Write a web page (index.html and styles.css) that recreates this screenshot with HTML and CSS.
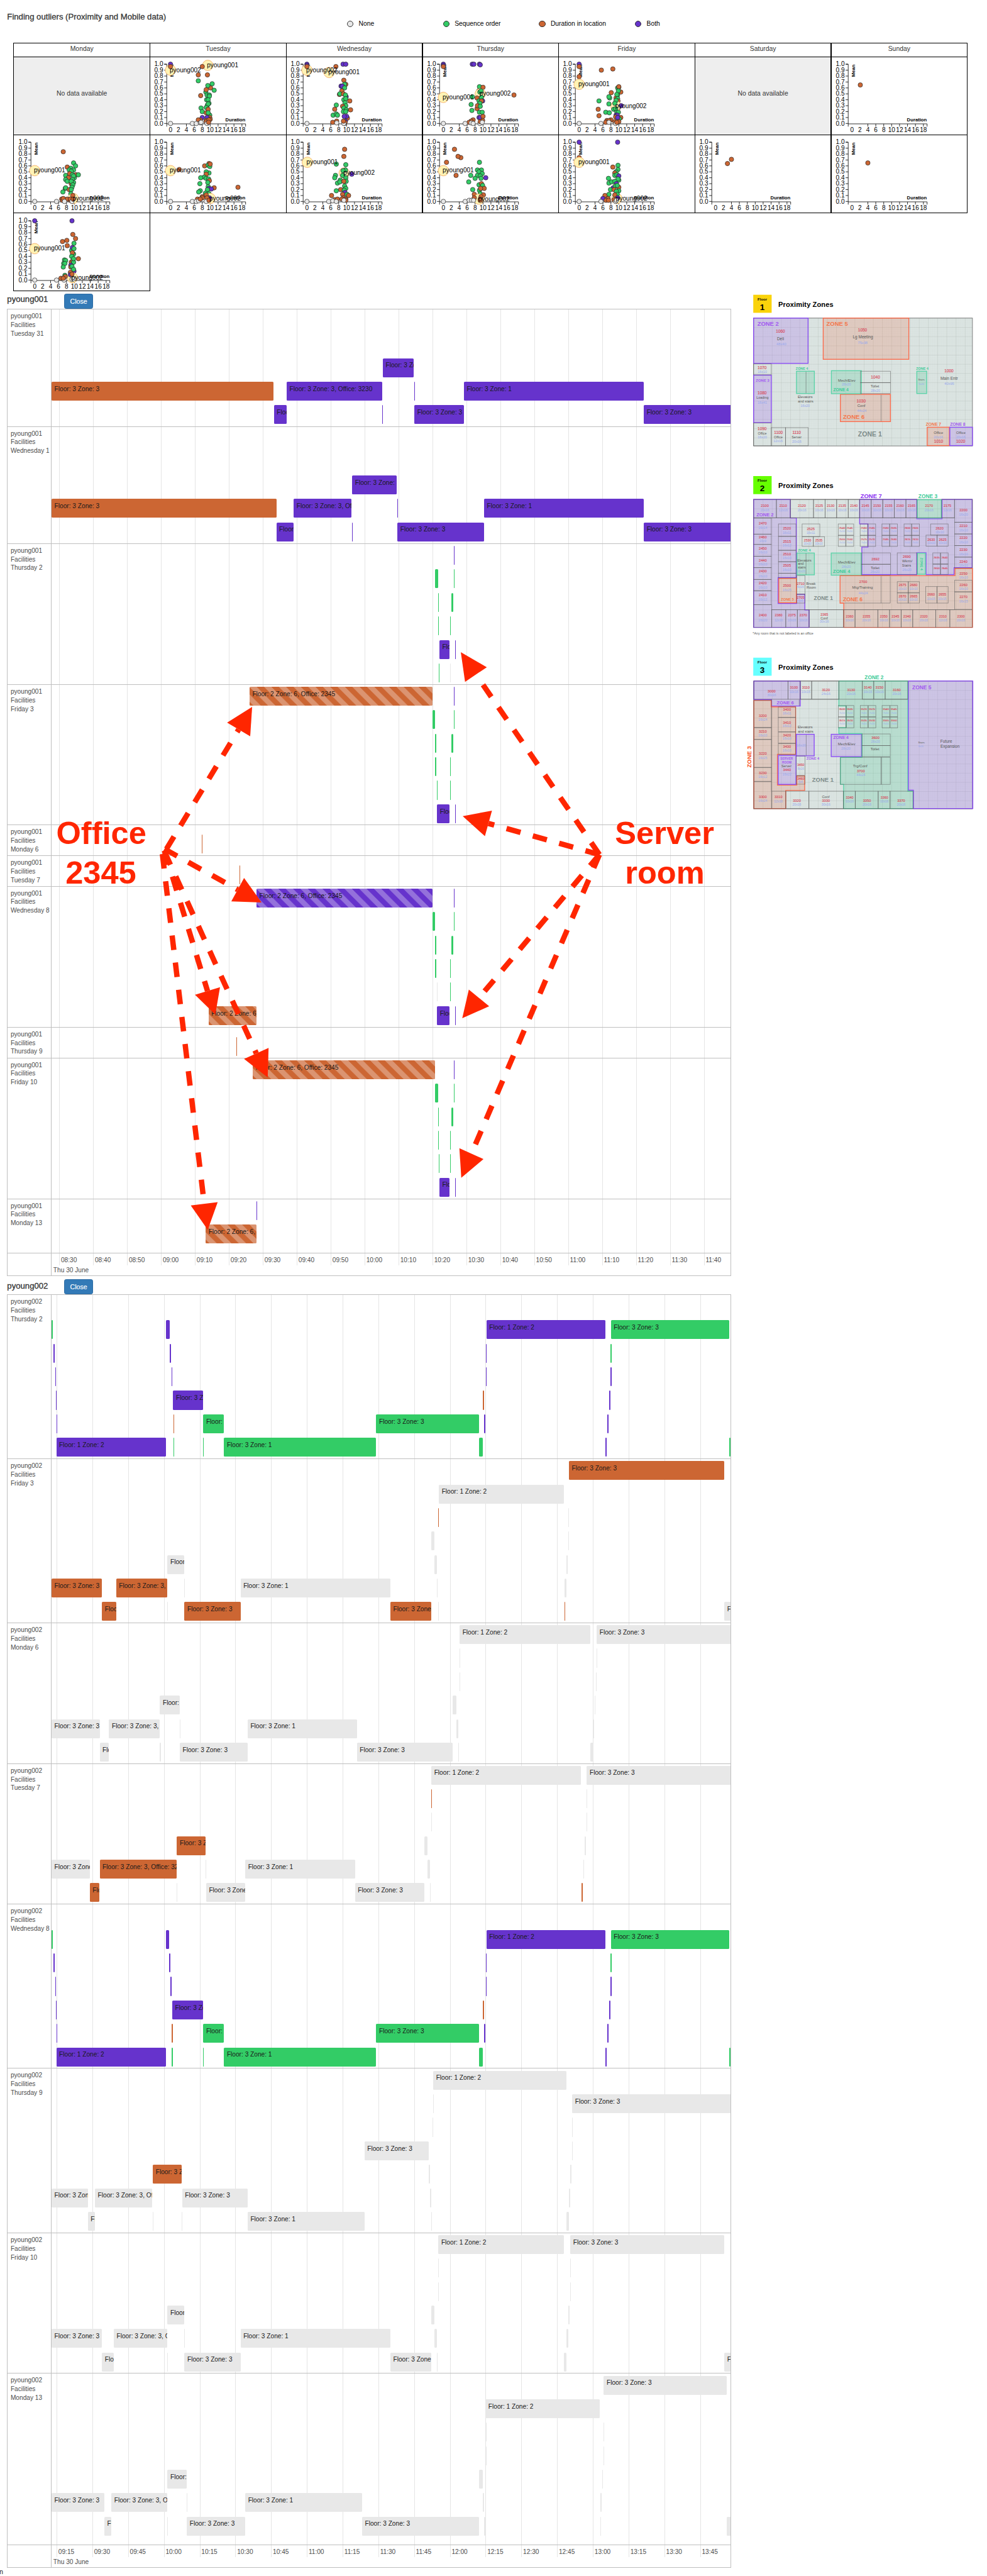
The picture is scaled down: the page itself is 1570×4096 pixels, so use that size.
FILE: index.html
```html
<!DOCTYPE html>
<html lang="en">
<head>
<meta charset="utf-8">
<title>Finding outliers</title>
<link rel="stylesheet" href="styles.css">
</head>
<body>
<div class="page">
  <header class="top">
    <h4 class="heading">Finding outliers (Proximity and Mobile data)</h4>
    <ul class="legend">
      <li><i class="dot none"></i>None</li>
      <li><i class="dot seq"></i>Sequence order</li>
      <li><i class="dot dur"></i>Duration in location</li>
      <li><i class="dot both"></i>Both</li>
    </ul>
  </header>
  <section class="calendar" id="calendar"></section>
  <main class="main">
    <div class="timelines">
      <div class="person"><h4 class="heading">pyoung001</h4><button class="close">Close</button></div>
      <section class="timeline" id="tl1"></section>
      <div class="person second"><h4 class="heading">pyoung002</h4><button class="close">Close</button></div>
      <section class="timeline" id="tl2"></section>
    </div>
    <aside class="plans">
      <svg id="plan1" viewBox="0 30 1419 990" width="473" height="330"></svg>
      <svg id="plan2" viewBox="0 0 1419 1080" width="473" height="360"></svg>
      <svg id="plan3" viewBox="30 -30 1419 1050" width="473" height="350"></svg>
    </aside>
  </main>
  <div class="tail">n</div>
  <svg class="notes" id="notes" viewBox="0 0 1933 5043" width="1933" height="5043"></svg>
</div>
<script src="script.js"></script>
</body>
</html>
```
FILE: styles.css
```css
html, body { margin: 0; padding: 0; background: #fff; }
body { font-family: "Liberation Sans", Arial, sans-serif; font-size: 12.5px; line-height: 17px; color: #333; overflow-x: hidden; }
.page { zoom: 0.81221; position: relative; width: 1933px; height: 5043px; overflow: hidden; }
.top { display: flex; height: 83.4px; }
.heading { margin: 0; font-size: 16.2px; line-height: 20px; font-weight: 400; -webkit-text-stroke: 0.35px #333; white-space: nowrap; }
.top .heading { width: 665px; padding: 23px 0 0 14px; box-sizing: border-box; }
.legend { display: flex; margin: 0; padding: 38px 0 0 14.5px; list-style: none; color: #000; }
.legend li { display: flex; gap: 10px; width: 188px; align-items: center; height: 18px; font-size: 12.7px; }
.dot { width: 13px; height: 13px; border: 1px solid #333; border-radius: 50%; box-sizing: border-box; }
.none { background: #e8e8e8; fill: #e8e8e8; }
.seq { background: #3c6; fill: #3c6; }
.dur { background: #c63; fill: #c63; }
.both { background: #63c; fill: #63c; }

.calendar { display: grid; grid-template-columns: repeat(7, 266.8px); grid-template-rows: 27.2px repeat(3, 153px); margin-left: 26.4px; }
.cell { border: 1px solid #000; margin: 0 -1px -1px 0; box-sizing: border-box; display: flex; justify-content: center; font-size: 12.8px; }
.cell.chart { justify-content: flex-start; }
.day { padding-top: 3px; }
.empty { background: #eee; align-items: center; padding-bottom: 8px; }
.plot { display: block; overflow: visible; margin: -1px 0 0 -1px; }
.plot line, .plot path { stroke: #000; fill: none; }
.plot text { fill: #000; font-size: 12.4px; }
.plot .title { font-size: 9.5px; font-weight: 700; }
.plot circle { stroke: #222; stroke-opacity: .85; }
.plot .hi { fill: #fff3b5; stroke: #f49a4a; }

.main { display: flex; justify-content: space-between; }
.timelines { width: 1419px; padding-left: 14px; box-sizing: content-box; }
.person { display: flex; align-items: flex-start; height: 35.2px; }
.person .heading { width: 111.8px; padding-top: 7px; }
.person.second { height: 35.6px; }
.person.second .heading { padding-top: 9px; }
.close { margin-top: 5.5px; width: 56.5px; height: 29.5px; padding: 0; background: #337ab7; border: 1px solid #2e6da4; border-radius: 4px; color: #fff; font: 13px "Liberation Sans", Arial, sans-serif; -webkit-text-stroke: .2px #fff; }
.second .close { margin-top: 6.2px; }
.timeline { position: relative; width: 1418.4px; border: 1px solid #bfbfbf; box-sizing: border-box; }
.row { display: flex; border-bottom: 1px solid #bfbfbf; box-sizing: border-box; position: relative; }
.name { width: 86.3px; padding: 4.8px 0 0 5.6px; box-sizing: border-box; border-right: 1px solid #bfbfbf; white-space: pre-line; color: #4d4d4d; flex: none; }
.lanes { position: relative; flex: 1; overflow: hidden; }
.bar { position: absolute; height: 37px; border-radius: 2px; box-sizing: border-box; overflow: hidden; white-space: nowrap; color: #1a1a1a; }
.bar span { display: block; padding: 5.8px 0 0 5.6px; }
.striped { background-image: linear-gradient(45deg, rgba(255,255,255,.3) 25%, transparent 25%, transparent 50%, rgba(255,255,255,.3) 50%, rgba(255,255,255,.3) 75%, transparent 75%); background-size: 28.8px 28.8px; }
.axis { display: flex; color: #4d4d4d; height: 43.5px; }
.axis .name { padding: 0; }
.axis .times { position: relative; flex: 1; padding: 24.5px 0 0 3px; box-sizing: border-box; }
.tick { position: absolute; top: 4.5px; padding-left: 3.4px; }
.gridlines { position: absolute; top: 0; bottom: 20px; left: 86.3px; right: 0; overflow: hidden; }
.gridlines i { position: absolute; top: 0; bottom: 0; border-left: 1px solid #e5e5e5; }
.plans { width: 473px; display: flex; flex-direction: column; }
.plans svg { display: block; }
.plans text { font-family: "Liberation Sans", Arial, sans-serif; text-anchor: middle; }
.floor { font-weight: 700; fill: #000; }
.num { fill: #d8485a; stroke: #d8485a; stroke-width: .5; }
.dim { fill: #98a9ee; }
.word, .wordx { fill: #555; }
.zp { fill: #a259f0; font-weight: 700; }
.zs { fill: #8a2cf2; font-weight: 700; }
.zo { fill: #f4774c; font-weight: 700; }
.zq { fill: #fa5120; font-weight: 700; }
.zg { fill: #3ccb98; font-weight: 700; }
.zn { fill: #7d8b8a; font-weight: 700; }
.room { fill: none; stroke: #555; stroke-opacity: .62; stroke-width: 3; }
.area { stroke-width: 5; fill-opacity: .24; }
.ap { stroke: #8a4bf5; fill: #a060f0; }
.ao { stroke: #fb6a4b; fill: #f0653c; fill-opacity: .2; }
.ag { stroke: #5ad3a8; fill: #4cc795; }
.tail { position: absolute; left: -1px; bottom: 0; color: #222; line-height: 16px; }
.notes { position: absolute; left: 0; top: 0; pointer-events: none; }
.notes text { fill: #ff2600; font: 700 62.3px "Liberation Sans", Arial, sans-serif; text-anchor: middle; }
.notes line { stroke: #ff2600; stroke-width: 10.5; stroke-dasharray: 28.5 25; }
.notes path { fill: #ff2600; }
```
FILE: script.js
```js
const KIND = { n: 'none', g: 'seq', o: 'dur', p: 'both' };

/* ---------- calendar of scatter plots: kind, duration, mean ---------- */
const H1 = 'pyoung001', H2 = 'pyoung002';
const days = ['Monday', 'Tuesday', 'Wednesday', 'Thursday', 'Friday', 'Saturday', 'Sunday'];
const plots = [
  null,
  'p 0 1,2 0 .9,1 9.4 .98,o 0 .96,o 8 .96,o 7 .82,o 9.3 .82,g 7 .72,g 10.5 .67,o 10.1 .6,g 9.4 .64,g 8.9 .53,o 9 .57,g 11 .56,o 7.6 .47,g 9.2 .48,g 9.8 .48,g 9.8 .46,g 9.1 .4,g 9.5 .4,g 9.7 .34,g 9.3 .31,g 9.5 .33,g 9 .27,g 7.7 .26,g 8 .2,o 9.5 .24,o 9 .18,g 9.9 .14,g 9.5 .18,p 8 .1,o 9.9 .1,p 9.2 .1,o 7.5 .06,o 7 .06,o 9 .05,o 10 .07,n 5.5 0,n 6.5 0,n 7.5 .01,o 9 .03,n 9.2 0,o 9.7 .06,o 9.6 .02,n 7.7 .02,n 0 0',
  'p 0 1,p 0 .98,2 0 .9,1 5.6 .86,o 0 .96,o 7.3 .96,p 9.1 1,p 9.8 1,o 9.3 .73,o 9.8 .66,g 9.5 .66,p 8.6 .63,p 8.9 .63,g 9.5 .6,o 8.8 .55,o 8.2 .49,g 8.3 .5,o 9.2 .5,p 9.9 .45,g 9.7 .48,g 9.3 .4,g 9.8 .42,o 10.8 .38,g 9.6 .35,g 7.4 .31,g 9.8 .3,o 9 .29,g 9.3 .26,o 7 .24,g 9.9 .23,o 11 .23,g 9.2 .2,g 9.8 .2,g 6.6 .14,g 7.4 .16,g 7.7 .14,o 10.2 .09,p 10 .12,p 9.4 .12,o 6.5 .02,o 7.5 .04,n 7.5 .01,n 9.5 0,p 9.7 .04,o 9.6 .02,n 9.3 0,o 9.2 .04,n 0 0',
  'p 0 1,p 0 .98,o 0 .96,1 0 .44,p 7.3 1,p 7.7 1,p 9.1 1,p 9.3 .99,g 9.1 .62,o 10 .61,o 8.9 .55,2 9.3 .5,g 9.2 .53,g 9.5 .55,g 7.3 .45,o 8.5 .43,g 9.6 .44,g 9 .38,p 9.9 .38,o 9.6 .38,g 7 .32,g 9.2 .34,o 8.5 .25,o 8.6 .3,g 9.3 .29,g 7.2 .22,g 9.1 .19,g 9.8 .19,p 9 .1,p 9.3 .1,o 10 .12,o 7.5 .06,o 7 .04,o 6.5 .02,n 5.5 0,n 7 .01,n 7.5 0,n 9.2 0,o 9.9 .05,o 9.3 .03,n 9.8 .02,o 17.8 .48,n 0 0',
  'p 0 1,o 0 .96,o 0 .79,1 0 .66,o 5.6 .9,o 8.5 .92,g 9.7 .6,g 10 .61,o 10 .62,o 10.5 .53,g 9.9 .55,o 8.1 .52,g 9.7 .48,o 9.3 .43,g 9.7 .42,g 9.5 .49,g 7.7 .43,g 7.5 .45,g 5 .38,o 9.8 .38,2 9.3 .29,g 9.3 .39,g 7.5 .33,g 9 .34,p 10.6 .3,g 8.7 .24,g 9.2 .25,o 4.8 .24,g 6.7 .19,g 7.6 .18,g 9.5 .19,g 9.9 .19,o 5 .13,p 9.3 .14,p 9.6 .14,o 9.2 .11,o 10.5 .1,g 10.1 .08,p 9.7 .1,o 7 .05,o 8 .06,o 7.5 .05,o 6.7 .02,n 7.5 .02,n 5.5 0,o 9 .03,o 10 .03,n 9.2 0,o 9.5 .02,n 0 0',
  null,
  'o 2.1 .65',
  'o 7.2 .84,1 0 .52,g 9.8 .65,g 10.3 .6,o 8.2 .58,g 9.1 .56,g 9.8 .53,g 8.7 .53,g 9.2 .51,o 10.4 .45,g 11 .45,g 7.8 .44,o 8.8 .47,o 8.5 .4,g 9.5 .45,g 10 .4,g 9.8 .43,g 7.8 .37,g 8.2 .34,g 9.5 .37,o 9.2 .3,g 9.8 .32,g 9.2 .34,g 9.6 .28,g 9.4 .24,g 7.7 .22,g 7.8 .23,g 7.1 .16,o 8.7 .2,g 9.2 .2,g 9.1 .13,2 9.7 .05,o 9.6 .1,o 6.8 .04,o 7 .02,o 7.5 .02,o 8.2 .04,o 7.2 .05,n 5.5 0,o 9 .02,n 7.5 0,o 9 .04,n 9.4 0,o 9.7 .04,n 0 0',
  '1 0 .52,o 2.2 .54,o 9.7 .64,o 8.6 .6,g 9.5 .61,g 9.9 .59,o 10 .63,g 9.7 .48,g 9 .5,o 9 .46,g 8.5 .41,g 7.6 .4,g 9 .39,g 9.6 .38,o 9.8 .35,g 9.4 .32,g 7.4 .3,o 11 .23,g 9.5 .25,p 9.7 .22,p 10.3 .21,o 17 .24,g 7.5 .18,g 7.1 .16,g 9.3 .2,g 8.8 .14,g 9.7 .13,2 10 .05,o 9 .11,p 9.8 .06,o 8 .08,o 6.8 .04,o 8 .06,o 9.2 .06,n 5.5 0,n 6.5 0,n 7.1 .01,n 9 0,o 7.5 .04,o 9.7 .02,n 0 0',
  'o 9.5 .88,o 9.3 .76,1 .1 .66,g 7.4 .63,g 9.8 .62,2 9.4 .48,g 9.7 .53,g 9.1 .52,p 11.3 .46,g 7.2 .44,g 7 .4,g 9.8 .4,g 9 .44,g 8.4 .36,g 9.9 .34,g 7.7 .31,g 8.3 .33,o 9.3 .34,g 9.5 .26,o 8.5 .2,g 7.4 .18,g 9.8 .22,g 9.4 .19,p 9.6 .15,g 10.1 .12,o 9 .12,o 6.2 .1,o 10.5 .1,o 9.2 .06,o 9.8 .04,o 7 .03,o 7.7 .04,n 5.5 0,n 6.5 .01,n 7.4 0,o 8.8 .04,o 9.8 .02,n 9.3 .02,n 0 0',
  'o 2.8 .88,o 4.4 .74,o 3.7 .76,o .8 .66,g 9.1 .66,1 0 .52,g 8.6 .53,g 9.6 .53,g 9 .5,o 3.2 .44,g 6.9 .44,g 9.8 .47,g 8.6 .44,g 8 .39,g 9.3 .43,g 9.5 .39,p 10.7 .4,g 6.4 .33,g 9 .28,o 9.6 .3,g 9.9 .27,g 7.4 .2,o 10.3 .22,g 9.1 .19,o 9.4 .22,g 9.3 .13,o 7.8 .12,o 10.1 .11,2 9 .04,o 9.5 .08,o 7.8 .06,n 5.5 0,n 6.5 .02,n 7.1 .02,n 7.6 .02,o 9.3 .04,o 9.3 .02,n 0 0',
  'p 0 1,p 9.7 1,o 0 .74,1 0 .66,g 9.8 .61,o 8.5 .58,g 9.8 .54,g 9.3 .5,o 9 .48,g 9 .44,g 9.5 .45,p 10 .43,g 7.4 .39,g 10 .36,g 9.8 .38,g 7.5 .31,g 8.2 .33,g 9 .34,p 9.4 .3,o 10 .24,p 8.6 .23,g 9.1 .26,g 9.6 .27,g 7.9 .2,o 8.8 .2,g 10 .18,g 9.4 .17,g 7.5 .12,2 9.5 .05,g 9.6 .12,o 9 .11,o 6.5 .1,p 9.7 .06,p 6 .05,o 7.3 .05,o 6.8 .02,o 7.4 .02,n 5.5 0,o 8.8 .03,n 9.2 0,n 9.4 .02,n 0 0',
  'o 3 .64,o 4 .71',
  'o 4 .65',
  'p 0 1,p 9.4 1,o 9.6 .77,o 10.3 .7,o 7 .65,o 8.1 .67,g 9.9 .62,o 8.2 .58,1 0 .53,g 9.3 .5,p 9.5 .55,g 9.9 .53,g 9.8 .44,o 9.5 .46,g 9.3 .4,o 11 .36,g 7.5 .34,g 7.8 .33,o 9.2 .3,o 9.6 .33,g 9.8 .3,g 9.8 .36,g 7.3 .28,g 7.6 .28,g 7.2 .22,p 9.1 .25,o 9.1 .22,g 9.4 .23,p 9.9 .15,g 9.8 .18,g 7.6 .08,o 9 .13,2 9.5 .04,p 9 .09,o 9.4 .1,o 7.7 .06,o 6.6 .03,n 5.5 0,n 7.4 0,o 7.2 .03,n 9.4 .01,n 9.8 .02,n 0 0'
];
const px = v => (40.9 + v * 7.77).toFixed(1), py = v => (130.9 - v * 116).toFixed(1);
function scatter(data) {
  let s = '<svg class="plot" width="265" height="152"><path d="M28.5 14.9H33.5V137M33.5 131.7H188V137"/>';
  for (let i = 0; i <= 10; i++) {
    const y = +py(i / 10);
    s += `<line x1="28.5" x2="33.5" y1="${y}" y2="${y}"/><text x="26.5" y="${y + 4}" text-anchor="end">${(i / 10).toFixed(1)}</text>`;
  }
  for (let i = 0; i <= 18; i += 2) {
    if (i > 2) s += `<line x1="${px(i)}" x2="${px(i)}" y1="131.7" y2="137"/>`;
    s += `<text x="${px(i)}" y="148.3" text-anchor="middle">${i}</text>`;
  }
  s += '<text class="title" x="187.5" y="126.5" text-anchor="end">Duration</text><text class="title" transform="translate(46.8 15.4) rotate(-90)" text-anchor="end">Mean</text>';
  let labels = '';
  for (const p of data.split(',')) {
    const [k, x, y] = p.split(' ');
    if (KIND[k]) s += `<circle class="${KIND[k]}" cx="${px(+x)}" cy="${py(+y)}" r="4.4"/>`;
    else {
      s += `<circle class="hi" cx="${px(+x)}" cy="${py(+y)}" r="10.3"/>`;
      labels += `<text x="${px(+x) - 1.6}" y="${+py(+y) + 3.8}">${k === '1' ? H1 : H2}</text>`;
    }
  }
  return s + labels + '</svg>';
}
document.getElementById('calendar').innerHTML =
  days.map(d => `<div class="cell day">${d}</div>`).join('') +
  plots.map(p => p ? `<div class="cell chart">${scatter(p)}</div>` : '<div class="cell empty">No data available</div>').join('');

/* ---------- timelines ---------- */
const A = 'Floor: 3 Zone: 3', B = 'Floor: 3 Zone: 1', C = 'Floor: 1 Zone: 2', D = 'Floor: 3 Zone: 3, Office: 3230', E = 'Floor: 2 Zone: 6, Office: 2345';
const TXT = { A, B, C, D, E };
const FROM = 108.5, SPAN = 1441;
/* item: lane kind start-end [label]; an upper-case kind is striped */
const big = s => `1g108-111,1p351-${s ? 357 : 359},1p1031-1283C,1g1295-1546A,2p111-115,2p${s ? '357-360' : '359-362'},2p1029-1032,2g1294-1297,3p115-117,3p${s ? '360-363' : '362-364'},3p1029-1032,3p1294-1297,4p117-119,4p${s ? 364 : 366}-429D,4o1023-1026,4p1291-1294,5p118-120,5o${s ? '363-366' : '366-368'},5g430-474A,5g797-1015A,5p1026-1029,5p1287-1291,6p118-351C,6g${s ? '363-366' : '366-368'},6g429-431,6g474-797B,6g1015-1023,6p1283-1287,6g1546-1550`;
const tl1 = [
  ['Tuesday 31', 229.6, 3.3, '3o108-579A,4p580-607A,3p607-810D,4p810-812,2p811-877D,3p877-879,4p878-983A,3p983-1365B,4p1365-1550A'],
  ['Wednesday 1', 229.4, 3.3, '3o108-585A,4p585-622A,3p622-745D,4p745-747,2p746-841D,3p841-843,4p842-1026A,3p1026-1365B,4p1365-1550A'],
  ['Thursday 2', 276, 3.8, '0p961-964,1g922-928,1g961-964,2g928-930,2g956-961,3g928-930,3g954-956,4p931-953A,4p964-966,5g930-932,5n953-955'],
  ['Friday 3', 275, 3.6, '0O528-917E,0p961-964,1g917-922,1g961-964,2g922-925,2g956-961,3g922-925,3g954-956,4g925-927,4g953-955,5p926-953A,5p964-966'],
  ['Monday 6', 59.9, 18.2, '0o427-429'],
  ['Tuesday 7', 59.9, 18.2, '0o506-508'],
  ['Wednesday 8', 276, 4, '0P543-917E,0p961-964,1g917-922,1g961-964,2g922-925,2g956-961,3g922-925,3g954-956,4n925-927,4g953-955,5O441-543E,5p926-953A,5p964-966'],
  ['Thursday 9', 60, 18.6, '0o500-502'],
  ['Friday 10', 276, 4, '0O535-922E,0p961-964,1g922-928,1g961-964,2g928-930,2g956-961,3g928-930,3g954-956,4g929-931,4g953-955,5p931-953A,5p964-966'],
  ['Monday 13', 106, 3.6, '0p543-545,1O435-543E']
];
const tl2 = [
  ['Thursday 2', 321.3, 3.6, big(0)],
  ['Friday 3', 321.3, 3.8, '0o1206-1536A,1n930-1196C,2o928-930,2n1204-1206,3n914-921,3n1204-1206,4n354-389A,4n921-926,4n1201-1204,5o108-215A,5o245-353D,5n389-391,5n509-827B,5n926-928,5n1197-1201,6o215-245A,6n353-355,6o390-509A,6o827-914A,6n928-930,6o1196-1198,6n1536-1550A'],
  ['Monday 6', 275.6, 3.8, '0n974-1252C,0n1265-1550A,1n973-975,1n1264-1266,2n973-975,2n1263-1265,3n338-380A,3n959-967,3n1260-1263,4n108-210A,4n230-337D,4n380-382,4n524-756B,4n967-971,4n1258-1260,5n210-230A,5n337-340,5n380-524A,5n756-959A,5n971-973,5n1252-1258'],
  ['Tuesday 7', 275.3, 3.4, '0n914-1232C,0n1244-1550A,1o913-915,1n1243-1245,2n913-915,2n1243-1245,3o374-435D,3n899-906,3n1239-1243,4n108-189A,4o210-373D,4n435-437,4n519-752B,4n906-911,4n1236-1239,5o189-210A,5n373-375,5n436-519A,5n752-899A,5n911-913,5o1232-1236'],
  ['Wednesday 8', 321.2, 3.6, big(1)],
  ['Thursday 9', 322.2, 4.2, '0n918-1201C,1n917-919,1n1213-1550A,2n916-918,2n1212-1214,3n772-908A,3n1212-1214,4o323-384D,4n908-911,4n1209-1212,5n108-185A,5n200-322D,5n385-524A,5n911-914,5n1206-1209,6n185-200A,6n322-324,6n384-386,6n524-772B,6n914-916,6n1201-1206'],
  ['Friday 10', 274.6, 3.6, '0n929-1196C,0n1209-1536A,1n928-930,1n1208-1210,2n928-930,2n1208-1210,3n354-389A,3n914-921,3n1205-1208,4n108-215A,4n240-353D,4n389-391,4n509-827B,4n921-926,4n1201-1205,5n215-240A,5n353-355,5n390-509A,5n827-914A,5n926-928,5n1196-1201,5n1536-1550A'],
  ['Monday 13', 336, 4.4, '0n1280-1541A,1n1029-1272C,2n1029-1032,2n1279-1281,3n1029-1032,3n1279-1281,4n354-395A,4n1015-1023,4n1276-1279,5n108-220A,5n235-353D,5n395-397,5n519-767B,5n1023-1026,5n1273-1276,6n220-235A,6n353-355,6n395-519A,6n767-1015A,6n1026-1029,6n1272-1274,6n1541-1550']
];
const pct = v => (v / SPAN * 100).toFixed(3) + '%';
function timeline(id, who, rows, first, step, start, every, count) {
  let s = '<div class="gridlines">';
  for (let i = 0; i < count; i++) s += `<i style="left:${pct(first + i * step - FROM)}"></i>`;
  s += '</div>';
  for (const [day, h, off, items] of rows) {
    s += `<div class="row" style="height:${h}px"><div class="name">${who}\nFacilities\n${day}</div><div class="lanes">`;
    for (const it of items.split(',')) {
      const m = it.match(/^(\d)(\w)(\d+)-(\d+)(\w?)$/), k = m[2].toLowerCase();
      /* very short visits are drawn a little narrower than their slot */
      const w = m[4] - m[3], trim = w < 5 ? 0.7 : 0;
      s += `<div class="bar ${KIND[k]}${k !== m[2] ? ' striped' : ''}" style="left:${pct(m[3] - FROM + trim / 2)};width:${pct(w - trim)};top:${off + 46 * m[1]}px">${m[5] ? `<span>${TXT[m[5]]}</span>` : ''}</div>`;
    }
    s += '</div></div>';
  }
  s += '<div class="axis"><div class="name"></div><div class="times">Thu 30 June';
  for (let i = 0; i < count; i++) {
    const t = start + i * every;
    s += `<span class="tick" style="left:${pct(first + i * step - FROM)}">${String(Math.floor(t / 60)).padStart(2, '0')}:${String(t % 60).padStart(2, '0')}</span>`;
  }
  document.getElementById(id).innerHTML = s + '</div></div>';
}
timeline('tl1', H1, tl1, 124.2, 72.02, 510, 10, 20);
timeline('tl2', H2, tl2, 118.7, 75.88, 555, 15, 19);

/* ---------- floor plans ---------- */
function plan(id, floor, color, y0, dx, rooms, lines, areas, texts) {
  const by = y0 - 136, top = y0;
  let s = `<defs><pattern id="${id}g" x="${46 + dx}" y="${top}" width="54" height="54" patternUnits="userSpaceOnUse"><rect width="54" height="54" fill="#e1e8e6"/><path d="M5.4 0V54M10.8 0V54M16.2 0V54M21.6 0V54M27 0V54M32.4 0V54M37.8 0V54M43.2 0V54M48.6 0V54M0 5.4H54M0 10.8H54M0 16.2H54M0 21.6H54M0 27H54M0 32.4H54M0 37.8H54M0 43.2H54M0 48.6H54" stroke="#8aa39b" stroke-opacity=".18" stroke-width="1.2"/><path d="M0 0V54M0 0H54" stroke="#7d918b" stroke-opacity=".7" stroke-width="2"/></pattern></defs>`;
  s += `<rect x="${45 + dx}" y="${by}" width="108" height="106" fill="${color}"/><text class="floor" x="${98 + dx}" y="${by + 33}" font-size="22">Floor</text><text class="floor" x="${98 + dx}" y="${by + 88}" font-size="50">${floor}</text><text class="floor" x="${354 + dx}" y="${by + 70}" font-size="41" textLength="323">Proximity Zones</text>`;
  s += `<rect x="${47 + dx}" y="${top + 1}" width="1286" height="751" fill="url(#${id}g)" stroke="#666" stroke-width="3"/>`;
  for (const a of areas) {
    const [k, ...n] = a.split(' ');
    s += n.length === 4 && !n[0].includes(',') ? `<rect class="area a${k}" x="${n[0]}" y="${n[1]}" width="${n[2]}" height="${n[3]}"/>` : `<polygon class="area a${k}" points="${n.join(' ')}"/>`;
  }
  for (const r of rooms.split(';')) { const n = r.split(' '); s += `<rect class="room" x="${n[0]}" y="${n[1]}" width="${n[2]}" height="${n[3]}"/>`; }
  s += `<path class="room" d="${lines}"/>`;
  const TURN = { zqr: -90, zgr: 90 };
  for (const t of texts.split(';')) {
    const m = t.match(/^(\w+) (\d+) (\d+) (\d+) (.+)$/);
    const rot = TURN[m[1]] ? ` transform="rotate(${TURN[m[1]]} ${m[2]} ${m[3]})"` : '';
    s += `<text class="${rot ? m[1].slice(0, 2) : m[1]}" x="${m[2]}" y="${m[3]}" font-size="${m[4]}"${rot}>${m[5]}</text>`;
  }
  document.getElementById(id).innerHTML = s;
}
/* rooms as "number x y size dy dims" expand to a number and its dimensions */
const rm = list => list.split(';').map(r => { const [n, x, y, sz, dy, d] = r.split(' '); return `num ${x} ${y} ${sz} ${n}` + (d ? `;dim ${x} ${+y + +dy} ${Math.round(sz * .92)} ${d}` : ''); }).join(';');

plan('plan1', 1, '#fad30b', 187, 0,
  '47 457 104 64;47 804 104 134;151 831 84 107;235 831 133 107;675 500 176 67;675 567 176 64',
  'M355 503V629M796 639V794',
  ['p 47 188 320 266', 'p 47 523 104 279', 'o 456 188 503 242', 'o 557 636 294 160', 'o 1067 829 130 108', 'p 1200 829 133 108', 'g 299 500 105 131', 'g 504 497 176 135', 'g 1006 500 58 131'],
  'zp 132 233 35 ZONE 2;num 205 275 24 1060;word 205 319 24 Deli;dim 210 348 21 48x40;zo 538 234 35 ZONE 5;num 687 267 24 1050;word 689 307 24 Lg Meeting;dim 688 339 21 75x38;num 97 488 24 1070;dim 98 510 20 16x10;zp 100 561 22 ZONE 3;num 97 634 24 1080;word 99 663 20 Loading;dim 98 691 20 16x41;zg 331 492 20 ZONE 4;word 350 657 21 Elevators;word 353 682 21 and stairs;dim 350 711 20 16x20;word 594 561 22 Mech/Elev;dim 592 585 20 28x20;zg 560 619 25 ZONE 4;num 763 543 24 1040;word 760 595 21 Toilet;dim 763 621 20 28x20;num 679 683 24 1030;word 680 711 22 Conf;dim 683 740 20 44x24;zo 636 780 35 ZONE 6;zg 1038 492 20 ZONE 4;word 1033 556 15 Stairs;dim 1033 580 15 9x20;num 1195 508 24 1000;word 1196 551 24 Main Entr;dim 1197 579 21 40x95;num 97 846 24 1090;word 98 872 20 Office;dim 98 896 20 16x20;num 193 869 24 1100;word 192 893 20 Office;dim 191 917 20 12x16;num 300 869 24 1110;word 300 895 20 Server;dim 301 920 20 20x16;zn 731 882 39 ZONE 1;zo 1104 821 25 ZONE 7;zp 1246 821 25 ZONE 8;word 1133 870 21 Office;dim 1133 894 20 20x16;num 1134 922 24 1010;word 1265 870 21 Office;dim 1265 894 20 20x16;num 1264 922 24 1020');

plan('plan2', 2, '#66ff00', 232, 0,
  '47 233 134 108;181 233 82 108;263 233 136 108;399 233 68 108;467 233 68 108;535 233 68 108;603 233 67 108;670 233 68 108;738 233 68 108;806 233 68 108;874 233 68 108;942 233 64 108;1152 233 75 108;1228 233 104 134;47 343 104 94;47 437 104 60;47 497 104 70;47 567 104 67;47 634 104 69;47 703 104 66;47 769 104 82;47 851 106 134;193 377 103 73;193 450 103 82;193 532 103 67;193 599 103 68;332 377 104 74;332 452 66 57;398 452 66 57;544 377 44 66;590 377 45 66;544 445 44 64;590 445 45 64;673 377 44 66;719 377 45 66;673 445 44 64;719 445 45 64;801 377 45 66;847 377 45 66;801 445 45 64;847 445 45 64;931 377 44 66;976 377 45 66;931 445 44 64;976 445 45 64;1087 377 103 66;1060 443 65 65;1125 443 65 65;1228 367 103 69;1228 436 103 68;1228 504 103 68;1228 572 103 64;1228 708 103 68;1228 776 103 103;680 547 171 67;680 614 171 64;891 547 115 127;1100 547 44 65;1146 547 44 65;1100 614 44 60;1146 614 44 60;301 680 48 110;301 790 48 52;891 716 65 66;956 716 65 66;891 782 65 60;956 782 65 60;1058 745 66 97;1125 745 65 97;153 881 83 104;236 881 68 104;304 881 69 104;373 881 203 104;576 881 67 104;643 881 134 104;777 881 69 104;846 881 68 104;914 881 68 104;982 881 135 104;1117 881 83 104;1200 881 132 104;193 667 103 27',
  'M355 550V675M796 684V842H850V684M580 842H796M47 341H670M670 341H1228M151 881H1228',
  ['p 47,233 263,233 263,342 298,342 298,692 191,692 191,844 300,844 300,790 348,790 348,882 373,882 373,985 47,985', 'o 195 697 103 143', 'p 670,233 1006,233 1006,347 1154,347 1154,233 1331,233 1331,634 1225,634 1225,675 1060,675 1060,546 1006,546 1006,675 683,675 683,513 719,513 719,377 670,377', 'g 1009 235 141 107', 'g 302 548 102 128', 'g 503 548 177 130', 'g 1010 549 46 124', 'o 555,681 1230,681 1230,638 1333,638 1333,985 577,985 577,842 555,842'],
  rm('2100 113 278 21 26 20x16;2110 221 278 21 26 12x16;2120 331 278 21 26 20x16;2125 432 278 20 26 10x16;2130 500 278 20 26 10x16;2135 568 278 20 26 10x16;2140 636 278 20 26 10x16;2145 704 278 20 26 10x16;2150 773 278 20 26 10x16;2155 840 278 20 26 10x16;2160 908 278 20 26 10x16;2165 975 278 20 26 10x16;2170 1078 278 21 26 20x16;2175 1186 278 20 26 12x16;2200 1280 302 21 26 16x20;2210 1280 396 21 26 16x10;2220 1280 464 21 26 16x10;2230 1280 537 21 23 16x10;2240 1280 605 21 22 16x10;2250 1280 675 21 22 16x10;2260 1280 743 21 22 16x10;2270 1280 813 21 24 16x15;2470 101 380 21 26 16x14;2460 101 463 21 22 16x9;2450 101 528 21 24 16x10;2440 101 599 21 21 16x10;2430 101 662 21 28 16x10;2420 101 733 21 24 16x10;2410 101 803 21 24 16x12;2400 101 921 21 28 16x20;2520 243 411 21 24 16x11;2515 243 486 21 24 16x12;2510 243 560 21 24 16x10;2505 243 629 21 25 16x10;2500 243 745 21 27 16x25;2525 383 413 21 23 16x11;2530 364 479 19 20 10x10;2535 430 479 19 20 10x10;2540 567 405 16 20 7x10;2545 612 405 16 20 7x10;2555 567 472 16 19 7x10;2550 612 472 16 19 7x10;2560 695 405 16 20 7x10;2565 742 405 16 20 7x10;2575 695 472 16 19 7x10;2570 742 472 16 19 7x10;2580 823 405 16 20 7x10;2585 870 405 16 20 7x10;2595 823 472 16 19 7x10;2590 870 472 16 19 7x10;2600 951 405 16 20 7x10;2605 998 405 16 20 7x10;2615 951 472 16 19 7x10;2610 998 472 16 19 7x10;2620 1140 411 21 22 16x10;2630 1091 475 20 20 10x10;2625 1158 475 20 20 10x10;2692 763 590 21;2690 947 577 21;2635 1122 579 16;2640 1169 579 16;2650 1122 644 16;2645 1169 644 16;2710 323 735 20 19 6x16;2705 323 816 20 18 6x6;2700 691 725 21;2675 922 742 20 23 10x10;2680 987 742 20 23 10x10;2670 922 808 20 21 10x10;2665 987 808 20 21 10x10;2660 1090 799 20 23 10x15;2655 1156 799 20 23 10x15;2380 194 921 20 30 12x16;2375 272 921 20 30 10x16;2370 339 921 20 30 10x16;2365 463 917 20;2360 611 927 20 24 10x16;2355 710 927 20 24 20x16;2350 812 927 20 24 10x16;2345 880 927 20 24 10x16;2340 948 927 20 24 10x16;2320 1047 927 20 24 20x16;2310 1159 927 20 24 12x16;2300 1265 927 20 24 20x16') +
  ';zp 114 332 28 ZONE 2;zs 738 224 35 ZONE 7;zg 1071 224 31 ZONE 3;zg 345 541 21 ZONE 4;word 345 597 20 Elevators;word 324 618 20 and;word 330 639 20 stairs;dim 327 661 18 16x20;word 594 608 22 Mech/Elev;dim 591 636 20 28x20;zg 564 665 28 ZONE 4;word 761 642 22 Toilet;dim 760 665 20 26x20;word 950 602 21 Wkrm/;word 946 629 21 Stairs;dim 948 654 20 26x20;zgr 1027 612 21 ZONE 4;word 384 734 21 Break;word 386 757 21 Room;zn 457 822 31 ZONE 1;word 687 759 22 Mtg/Training;dim 691 790 20 44x24;zo 630 832 32 ZONE 6;zo 246 829 21 ZONE 5;word 462 937 20 Conf;dim 462 958 20 30x16;wordx 220 1026 20 *Any room that is not labeled is an office');

plan('plan3', 3, '#66ffff', 190, 30,
  '79 191 200 107;279 191 72 107;351 191 66 107;420 191 158 107;578 191 138 107;716 191 67 107;783 191 67 107;850 191 133 107;79 305 103 158;79 466 103 67;79 535 103 163;79 700 103 80;79 782 103 158;222 343 102 62;222 405 102 84;222 491 102 65;222 559 102 63;328 631 51 114;328 749 51 48;575 335 44 66;622 335 44 66;575 403 44 63;622 403 44 63;704 335 44 66;751 335 44 66;704 403 44 63;751 403 44 63;832 335 45 66;879 335 44 66;832 403 45 63;879 403 44 63;714 502 166 68;714 570 166 65;587 639 240 159;827 639 53 159;184 838 82 102;266 838 136 102;402 838 203 102;605 838 70 102;675 838 134 102;809 838 70 102;879 838 136 102',
  'M386 507V629M182 298V305M351 298H578M716 298H983M345 300V336M182 346V838',
  ['p 79,191 351,191 351,338 182,338 182,300 79,300', 'o 79,305 180,305 180,343 324,343 324,622 217,622 217,802 331,802 331,749 377,749 377,834 266,834 266,940 79,940', 'p 222 628 104 170', 'p 328 504 105 127', 'p 533 504 178 131', 'g 578,191 983,191 983,838 1014,838 1014,940 606,940 606,798 587,798 587,640 714,640 714,500 578,500 578,465 620,465 620,338 578,338', 'p 987,191 1365,191 1365,940 1016,940 1016,832 987,832'],
  rm('3000 183 257 21 22 30x16;3100 314 235 21 26 10x16;3110 384 235 21 26 10x16;3120 502 250 21 22 24x16;3130 650 250 21 22 20x16;3140 748 235 21 26 10x16;3150 816 235 21 26 10x16;3160 918 250 21 22 20x16;3200 131 402 21 24 16x24;3210 131 495 21 22 16x10;3220 131 622 21 26 16x25;3230 131 738 21 24 16x12;3300 131 877 21 25 16x24;3400 273 367 21 21 16x11;3410 273 443 21 20 16x12;3420 273 517 21 20 16x10;3430 273 585 21 22 16x10;3440 273 721 21 24 16x22;3450 354 690 18 21 8x16;3460 354 772 18 18 6x6;3500 597 363 16 20 7x10;3505 643 363 16 20 7x10;3515 597 428 16 20 7x10;3510 643 428 16 20 7x10;3520 725 363 16 20 7x10;3525 773 363 16 20 7x10;3535 725 428 16 20 7x10;3530 773 428 16 20 7x10;3540 854 363 16 20 7x10;3545 901 363 16 20 7x10;3555 854 428 16 20 7x10;3550 901 428 16 20 7x10;3600 793 532 21 23 26x20;3700 707 727 21 23 44x24;3310 223 877 21 28 12x16;3320 331 900 21 23 20x16;3330 502 900 21 23 30x16;3340 641 882 20 23 10x16;3350 743 900 21 23 20x16;3360 845 882 20 23 10x16;3370 944 900 21 23 20x16') +
  ';zp 263 327 28 ZONE 6;zg 785 182 31 ZONE 2;zp 1065 238 31 ZONE 5;zqr 65 636 35 ZONE 3;word 380 470 21 Elevators;word 383 494 21 and stairs;dim 357 577 20 16x20;zp 590 533 25 ZONE 4;word 623 570 22 Mech/Elev;dim 619 595 20 28x20;zp 425 655 21 ZONE 4;zp 271 654 18 SERVER;zp 272 674 18 ROOM;word 270 699 20 Server;word 790 599 22 Toilet;word 703 699 22 Trg/Conf;zn 484 782 35 ZONE 1;word 501 877 21 Conf;word 1063 559 15 Stairs;dim 1060 578 14 9x20;word 1209 554 24 Future;word 1231 584 24 Expansion');

/* ---------- annotations: start, head base corners, tip ---------- */
const arrows = [
  [326, 1662, 444.8, 1414.7, 490, 1441.5, 493.8, 1383.9],
  [322, 1662, 478, 1718.7, 453, 1764.7, 512.3, 1766.9],
  [322, 1665, 381.9, 1947.6, 430.9, 1932.7, 421.7, 1986.4],
  [322, 1667, 478, 2073, 526, 2051.6, 524.3, 2109.3],
  [318, 1672, 373.6, 2360, 426.3, 2353.5, 406.9, 2407.7],
  [1174, 1673, 953.4, 1306.2, 910.8, 1334.8, 902.5, 1276.8],
  [1174, 1673, 963.5, 1587, 949.7, 1637, 906.2, 1597.7],
  [1174, 1673, 918.2, 1937.2, 958, 1970, 905.3, 1993.4],
  [1174, 1673, 899.7, 2248, 946.9, 2269, 903.4, 2305.8]
];
document.getElementById('notes').innerHTML = arrows.map(a =>
  `<line x1="${a[0]}" y1="${a[1]}" x2="${(a[2] + a[4]) / 2}" y2="${(a[3] + a[5]) / 2}"/><path d="M${a[2]} ${a[3]}L${a[4]} ${a[5]}L${a[6]} ${a[7]}Z"/>`).join('') +
  '<text x="198.5" y="1652">Office</text><text x="197.5" y="1729.5">2345</text><text x="1301.5" y="1652">Server</text><text x="1302" y="1729.5">room</text>';
```
